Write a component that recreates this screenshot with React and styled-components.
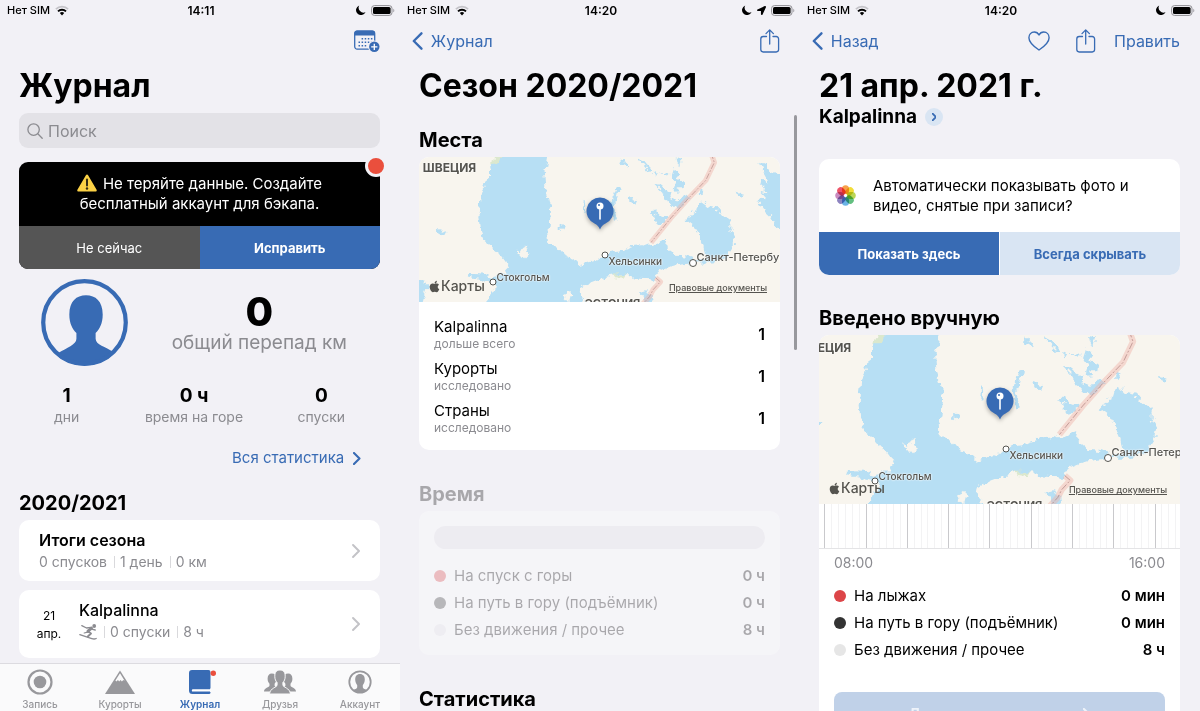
import styled, { createGlobalStyle } from "styled-components";
import { FaApple, FaLocationArrow } from "react-icons/fa";

const blue = "#386bb4";
const grey = "#8b8b90";

const GlobalStyle = createGlobalStyle`
  * { box-sizing: border-box; }
  body {
    margin: 0;
    background: #f2f1f6;
    color: #000;
    font-family: Inter, "Liberation Sans", sans-serif;
  }
  h1, h2, h3, p, ul, dl, dd { margin: 0; padding: 0; }
  button, input { font: inherit; border: 0; padding: 0; background: none; color: inherit; }
  a { color: inherit; text-decoration: none; }
  svg { display: block; flex-shrink: 0; }
`;

const Screens = styled.main`
  display: grid;
  grid-template-columns: repeat(3, 1fr);
  height: 100vh;
  overflow: hidden;
`;

const Screen = styled.section`
  display: flex;
  flex-direction: column;
  min-width: 0;
  min-height: 0;
  position: relative;
`;

const Content = styled.div`
  flex: 1;
  min-height: 0;
  overflow: hidden;
  padding: 0 20px 0 19px;
`;

/* status bar */

const StatusRow = styled.div`
  display: grid;
  grid-template-columns: 1fr auto 1fr;
  align-items: center;
  height: 20px;
  padding: 0 5px 0 7px;
  font-size: 11px;
  font-weight: 500;
`;

const StatusSide = styled.div`
  display: flex;
  align-items: center;
  justify-content: ${(p) => (p.$end ? "flex-end" : "flex-start")};
  gap: 5px;
`;

const Clock = styled.span`
  font-size: 12px;
  font-weight: 600;
`;

/* navigation */

const NavBar = styled.nav`
  display: flex;
  align-items: center;
  justify-content: space-between;
  height: 42px;
  padding: 0 20px 0 12px;
  color: ${blue};
  font-size: 16px;
`;

const NavActions = styled.div`
  display: flex;
  align-items: center;
  gap: 18px;
  margin-left: auto;
`;

const BackLink = styled.a`
  display: flex;
  align-items: center;
  gap: 8px;
`;

const IconButton = styled.button`
  display: flex;
  padding: 0 ${(p) => (p.$roomy ? 8 : 0)}px;
  color: ${blue};
`;

const Title = styled.h1`
  padding-top: 4px;
  font-size: 32px;
  line-height: 40px;
  font-weight: 700;
  white-space: nowrap;
`;

const Heading = styled.h2`
  margin: ${(p) => p.$top}px 0 3px;
  font-size: 20px;
  line-height: 28px;
  font-weight: 700;
`;

/* journal */

const SearchBox = styled.label`
  display: flex;
  align-items: center;
  gap: 5px;
  height: 35px;
  margin-top: 7px;
  padding: 0 8px;
  border-radius: 9px;
  background: #e3e2e7;
  color: ${grey};
`;

const SearchInput = styled.input`
  flex: 1;
  min-width: 0;
  outline: 0;
  font-size: 16px;
  &::placeholder { color: ${grey}; opacity: 1; }
`;

const Banner = styled.div`
  position: relative;
  margin-top: 14px;
`;

const BannerBody = styled.div`
  border-radius: 9px;
  overflow: hidden;
  background: #000;
`;

const BannerText = styled.p`
  padding: 12px 40px;
  color: #fff;
  font-size: 15px;
  line-height: 20px;
  text-align: center;
  svg { display: inline-block; vertical-align: -3px; margin-right: 6px; }
`;

const BannerDot = styled.span`
  position: absolute;
  top: -7px;
  right: -7px;
  width: 22px;
  height: 22px;
  border: 3px solid #f2f1f6;
  border-radius: 50%;
  background: #ea4f3d;
`;

const ButtonPair = styled.div`
  display: grid;
  grid-template-columns: 1fr 1fr;
  gap: ${(p) => p.$gap || 0}px;
`;

const tones = {
  dark: `background: #555; color: #fff; font-weight: 400;`,
  primary: `background: ${blue}; color: #fff; font-weight: 700;`,
  light: `background: #d9e5f3; color: ${blue}; font-weight: 700;`,
};

const BlockButton = styled.button`
  && { ${(p) => tones[p.$tone]} }
  height: 43px;
  font-size: 13px;
`;

const Profile = styled.div`
  display: flex;
  align-items: center;
  margin-top: 10px;
  padding: 0 33px 0 22px;
`;

const Total = styled.div`
  flex: 1;
  display: flex;
  flex-direction: column;
  align-items: flex-end;
`;

const TotalInner = styled.div`
  text-align: center;
  strong { display: block; font-size: 40px; line-height: 40px; font-weight: 800; }
  span { display: block; color: ${grey}; font-size: 19px; line-height: 22px; white-space: nowrap; }
`;

const Stats = styled.dl`
  display: grid;
  grid-template-columns: repeat(3, 1fr);
  margin: 18px -5px 0 -16px;
  text-align: center;
`;

const Stat = styled.div`
  display: flex;
  flex-direction: column-reverse;
  dt { color: ${grey}; font-size: 14px; line-height: 18px; }
  dd { font-size: 19px; line-height: 24px; font-weight: 700; }
`;

const AllStats = styled.a`
  display: flex;
  align-items: center;
  justify-content: flex-end;
  gap: 9px;
  margin-top: 21px;
  padding-right: 19px;
  color: ${blue};
  font-size: 15px;
  line-height: 22px;
`;

const Entry = styled.a`
  display: flex;
  align-items: center;
  min-height: ${(p) => (p.$tall ? 68 : 61)}px;
  margin-bottom: 9px;
  padding-right: 20px;
  border-radius: 10px;
  background: #fff;
`;

const EntryDate = styled.div`
  width: 60px;
  padding-top: 2px;
  font-size: 12px;
  line-height: 18px;
  text-align: center;
`;

const EntryText = styled.div`
  flex: 1;
  align-self: flex-start;
  padding: 10px 0 0 ${(p) => (p.$inset ? 20 : 0)}px;
  line-height: 21px;
  h3 { font-size: 16px; line-height: 21px; font-weight: ${(p) => (p.$inset ? 600 : 500)}; }
`;

const Facts = styled.p`
  display: flex;
  align-items: center;
  color: ${grey};
  font-size: 14px;
  > * + * {
    margin-left: 7px;
    padding-left: 6px;
    background: linear-gradient(#d9d9dc, #d9d9dc) left center / 1px 12px no-repeat;
  }
`;

const TabBar = styled.nav`
  display: grid;
  grid-template-columns: repeat(5, 1fr);
  height: 48px;
  border-top: 1px solid #dcdbe0;
  background: #fafafb;
`;

const Tab = styled.a`
  display: flex;
  flex-direction: column;
  align-items: center;
  gap: 2px;
  padding-top: 5px;
  color: ${(p) => (p.$active ? blue : "#98989c")};
  font-size: 10px;
  line-height: 14px;
  font-weight: ${(p) => (p.$active ? 600 : 500)};
`;

/* cards */

const Card = styled.div`
  overflow: hidden;
  border-radius: 10px;
  background: #fff;
`;

const CardBody = styled.div`
  padding: ${(p) => p.$top}px 15px 15px;
`;

const PlaceRow = styled.li`
  display: flex;
  align-items: center;
  justify-content: space-between;
  & + & { margin-top: 8px; }
  h3 { font-size: 15px; line-height: 19px; font-weight: 400; }
  p { color: ${grey}; font-size: 12px; line-height: 15px; }
  strong { font-size: 16px; font-weight: 600; }
`;

const PlainList = styled.ul`
  list-style: none;
`;

const Disabled = styled.div`
  opacity: 0.3;
`;

const EmptyBar = styled.div`
  height: 23px;
  margin-bottom: 17px;
  border-radius: 12px;
  background: #e4e3e8;
`;

const LegendRow = styled.li`
  display: flex;
  align-items: center;
  gap: 8px;
  font-size: 15px;
  line-height: 20px;
  & + & { margin-top: 7px; }
  strong { margin-left: auto; font-weight: 600; }
`;

const Dot = styled.span`
  width: 12px;
  height: 12px;
  border-radius: 50%;
  background: ${(p) => p.$color};
`;

const ScrollThumb = styled.div`
  position: absolute;
  top: 115px;
  right: 3px;
  width: 3px;
  height: 235px;
  border-radius: 2px;
  background: #98989d;
`;

/* day */

const Resort = styled.p`
  display: flex;
  align-items: center;
  gap: 8px;
  font-size: 19px;
  line-height: 22px;
  font-weight: 700;
`;

const RoundButton = styled.button`
  && { background: #d9e5f3; color: ${blue}; }
  display: flex;
  align-items: center;
  justify-content: center;
  width: 18px;
  height: 18px;
  border-radius: 50%;
`;

const PhotoCard = styled(Card)`
  margin-top: 31px;
`;

const PhotoPrompt = styled.div`
  display: flex;
  align-items: center;
  gap: 17px;
  min-height: 73px;
  padding: 0 16px;
  font-size: 15px;
  line-height: 20px;
`;

const Petal = styled.rect`
  mix-blend-mode: multiply;
`;

const Timeline = styled.svg`
  width: 100%;
  height: 45px;
  border-bottom: 1px solid #e4e4e6;
`;

const Hours = styled.div`
  display: flex;
  justify-content: space-between;
  margin-bottom: 13px;
  color: ${grey};
  font-size: 14px;
  line-height: 20px;
`;

const DetailsButton = styled.button`
  && { background: #c0d1e8; color: #eef3fa; }
  display: flex;
  align-items: center;
  justify-content: center;
  gap: 14px;
  width: 100%;
  height: 43px;
  margin-top: 32px;
  border-radius: 8px;
  font-size: 14px;
  font-weight: 700;
`;

/* map */

const MapFrame = styled.div`
  position: relative;
  overflow: hidden;
  height: ${(p) => p.$height}px;
  background: #f8f5ee;
  color: #55544f;
`;

const MapDrawing = styled.svg`
  width: 100%;
  height: 100%;
`;

const MapLabel = styled.span`
  position: absolute;
  left: calc(50% + ${(p) => p.$x}px);
  top: calc(50% + ${(p) => p.$y}px);
  transform: translate(${(p) => (p.$centered ? "-50%" : "0")}, -50%);
  font-size: ${(p) => p.$size}px;
  line-height: 14px;
  font-weight: ${(p) => p.$weight};
  white-space: nowrap;
  text-shadow: 0 0 2px #fff, 0 0 2px #fff;
`;

const CityDot = styled.span`
  position: absolute;
  left: calc(50% + ${(p) => p.$x}px);
  top: calc(50% + ${(p) => p.$y}px);
  transform: translate(-50%, -50%);
  width: ${(p) => p.$size}px;
  height: ${(p) => p.$size}px;
  border: 1px solid #55544f;
  border-radius: 50%;
  background: #fff;
`;

const MapPin = styled.svg`
  position: absolute;
  left: 50%;
  bottom: 50%;
  transform: translateX(-50%);
  overflow: visible;
  filter: drop-shadow(0 2px 2px rgba(0, 0, 0, 0.3));
`;

const MapBrand = styled.span`
  position: absolute;
  left: 9px;
  bottom: 6px;
  display: flex;
  align-items: center;
  font-size: 14px;
  line-height: 20px;
  font-weight: 500;
`;

const LegalLink = styled.a`
  && { text-decoration: underline; }
  position: absolute;
  right: 13px;
  bottom: 7px;
  font-size: 9px;
  line-height: 14px;
  font-weight: 500;
`;

function Chevron({ size = 14, width = 2, color = "currentColor", back }) {
  return (
    <svg width={size * 0.6} height={size} viewBox="0 0 12 20" fill="none" stroke={color}
      strokeWidth={width} strokeLinecap="round" strokeLinejoin="round" aria-hidden="true">
      <path d={back ? "M10.5 1.5 2 10l8.5 8.5" : "M1.5 1.5 10 10l-8.5 8.5"} />
    </svg>
  );
}

function StatusBar({ time, location }) {
  return (
    <StatusRow>
      <StatusSide>
        Нет SIM
        <svg width="14" height="11" viewBox="0 0 14 11" fill="none">
          <path d="M.9 4.1a8.8 8.8 0 0 1 12.2 0" stroke="#c4c3c8" strokeWidth="1.8" />
          <path d="M3 6.4a5.7 5.7 0 0 1 8 0" stroke="#000" strokeWidth="1.9" />
          <path d="M7 10.4 4.8 8.1a3.2 3.2 0 0 1 4.4 0z" fill="#000" />
        </svg>
      </StatusSide>
      <Clock>{time}</Clock>
      <StatusSide $end>
        <svg width="10" height="10" viewBox="0 0 10 10">
          <path d="M3.2.4a5 5 0 1 0 6.4 6.7A4.9 4.9 0 0 1 3.2.4z" fill="#000" />
        </svg>
        {location && <FaLocationArrow size={9} />}
        <svg width="24" height="11" viewBox="0 0 24 11">
          <rect x=".6" y=".6" width="20.4" height="9.8" rx="2.8" fill="none" stroke="#8f8e93" />
          <rect x="2" y="2" width="17.6" height="7" rx="1.6" fill="#000" />
          <path d="M22.4 3.7v3.6c1.2-.5 1.2-3.1 0-3.6z" fill="#8f8e93" />
        </svg>
      </StatusSide>
    </StatusRow>
  );
}

function ShareIcon() {
  return (
    <svg width="20" height="24" viewBox="0 0 20 24" fill="none" stroke="currentColor"
      strokeWidth="1.3" strokeLinecap="round" strokeLinejoin="round">
      <path d="M6.500 7.500H3.200A2.400 2.400 0 0 0 .8 9.900v10.700A2.400 2.400 0 0 0 3.200 23h13a2.400 2.400 0 0 0 2.400-2.400V9.900a2.400 2.400 0 0 0-2.400-2.400H13" />
      <path d="M9.700 15V1.200M6 4.600l3.700-3.700 3.700 3.700" />
    </svg>
  );
}

function HeartIcon() {
  return (
    <svg width="22" height="20" viewBox="0 0 22 20" fill="none" stroke="currentColor" strokeWidth="1.4" strokeLinejoin="round">
      <path d="M11 19C7 16.300 .9 12 .9 6.700.9 3.400 3.200 1 6.200 1 8.400 1 10.100 2.200 11 4c.9-1.800 2.600-3 4.800-3 3 0 5.300 2.400 5.300 5.700C21.100 12 15 16.300 11 19z" />
    </svg>
  );
}

function SkierIcon() {
  return (
    <svg width="18" height="16" viewBox="0 0 18 16" fill="none" stroke="currentColor" strokeLinecap="round" strokeLinejoin="round">
      <circle cx="15.200" cy="2" r="1.900" fill="currentColor" stroke="none" />
      <path d="M12.500 4.200 9 7.200" strokeWidth="3" />
      <path d="M9.200 7.500 12 9.500l-3.200 3" strokeWidth="1.900" />
      <path d="M2.800 1.600 7.500 4l4.500-.6M12.800 5.200l3.400.8" strokeWidth="1.300" />
      <path d="M9.500 7.800 5.200 9" strokeWidth="1.200" />
      <path d="m.8 10.600 12 4c1.500.5 3 .6 4.400-.1" strokeWidth="1.300" />
    </svg>
  );
}

function CalendarAddIcon() {
  return (
    <svg width="26" height="23" viewBox="0 0 26 23">
      <rect x=".7" y="1.100" width="20" height="18" rx="2.500" fill="none" stroke={blue} strokeWidth="1.300" />
      <path d="M.5 5.500V3A2.500 2.500 0 0 1 3 .5h15.400a2.500 2.500 0 0 1 2.500 2.500v2.500z" fill={blue} />
      {[8, 11.5, 15].map((y, row) =>
        [4.5, 7.6, 10.7, 13.8, 16.900].map((x, col) =>
          (row === 0 && col === 0) || (row === 2 && col > 2) ? null : (
            <rect key={x + y} x={x} y={y} width="1.500" height="1.500" fill={blue} />
          )
        )
      )}
      <circle cx="20.300" cy="16.800" r="6.200" fill="#f2f1f6" />
      <circle cx="20.300" cy="16.800" r="5.200" fill={blue} />
      <path d="M20.300 13.700v6.200M17.200 16.800h6.200" stroke="#fff" strokeWidth="1.300" />
    </svg>
  );
}

function Avatar() {
  return (
    <svg width="87" height="87" viewBox="0 0 86 86" role="img" aria-label="Профиль">
      <clipPath id="avatar"><circle cx="43" cy="43" r="42.500" /></clipPath>
      <g clipPath="url(#avatar)" fill={blue}>
        <path d="M44.500 16C54 16 61 22 61 35c0 9-3 14-7 18.500V59c0 6 10 8 17.500 13v18h-54V73C25 68 35 65 35 59v-5.500C31 49 28 44 28 35c0-13 7-19 16.500-19z" />
      </g>
      <circle cx="43" cy="43" r="40.800" fill="none" stroke={blue} strokeWidth="4.200" />
    </svg>
  );
}

function PhotosIcon() {
  const petals = ["#f7a04a", "#f2dd3a", "#bcd655", "#63bf80", "#6bb4e6", "#8d84c0", "#c98bc0", "#ee5468"];
  return (
    <svg width="21" height="21" viewBox="-12 -12 24 24">
      {petals.map((color, i) => (
        <Petal key={color} x="-4" y="-11.700" width="8" height="10" rx="4" fill={color}
          transform={`rotate(${i * 45})`} />
      ))}
    </svg>
  );
}

function WarningIcon() {
  return (
    <svg width="20" height="18" viewBox="0 0 20 18">
      <path d="M8.900 1.200a1.300 1.300 0 0 1 2.200 0l8.500 14.500a1.200 1.200 0 0 1-1.100 1.800h-17A1.200 1.200 0 0 1 .4 15.700z" fill="#fbd145" />
      <path d="M10 5.500v6" stroke="#332c16" strokeWidth="2" strokeLinecap="round" />
      <circle cx="10" cy="14.500" r="1.200" fill="#332c16" />
    </svg>
  );
}

const tabs = [
  {
    name: "Запись",
    icon: (
      <>
        <circle cx="16" cy="13" r="11.500" fill="none" stroke="currentColor" strokeWidth="2.200" />
        <circle cx="16" cy="13" r="6.300" />
      </>
    ),
  },
  {
    name: "Курорты",
    icon: (
      <>
        <path d="M16 1.500 31 25H1z" />
        <path d="m16 4.200-4.600 7.300.9 1 1.700-1.500 1.100 1.600 1.500-1.600 1.300 1.500 1.400-1.400 1.300.7z" fill="#fafafb" />
      </>
    ),
  },
  {
    name: "Журнал",
    active: true,
    icon: (
      <>
        <path d="M8 1h16.500a2 2 0 0 1 2 2v16.500H26V23h.5v.5a1.500 1.500 0 0 1-1.500 1.500H8.500A3.500 3.500 0 0 1 5 21.500V4a3 3 0 0 1 3-3z" />
        <path d="M9 20.200h17.500v2.400H9a1.200 1.200 0 0 1 0-2.400z" fill="#fff" />
        <circle cx="29.300" cy="4.300" r="2.700" fill="#ea4f3d" />
      </>
    ),
  },
  {
    name: "Друзья",
    icon: (
      <>
        <path d="M7.800 4.500c3 0 4.600 2 4.600 5.200 0 2.400-.8 3.900-1.800 5v1.800c0 1.600 3 1.800 4.400 3.500v2.500H0c0-4 5.500-3.800 5.500-6v-1.800c-1-1.100-1.900-2.600-1.900-5 0-3.200 1.500-5.200 4.200-5.200z" />
        <path d="M24.200 4.500c-3 0-4.600 2-4.600 5.200 0 2.400.8 3.900 1.800 5v1.800c0 1.600-3 1.800-4.400 3.500v2.500h15c0-4-5.500-3.800-5.500-6v-1.800c1-1.100 1.900-2.600 1.900-5 0-3.200-1.500-5.200-4.200-5.200z" />
        <path stroke="#fafafb" d="M16 1c3.400 0 5.200 2.400 5.200 6.200 0 3-.9 4.900-2.300 6.300v2.400c0 2.700 6.900 2.700 7.600 9.100h-21c.7-6.400 7.600-6.400 7.600-9.100v-2.400c-1.400-1.400-2.300-3.300-2.300-6.300C10.800 3.400 12.600 1 16 1z" />
      </>
    ),
  },
  {
    name: "Аккаунт",
    icon: (
      <>
        <circle cx="16" cy="13" r="10.700" fill="none" stroke="currentColor" strokeWidth="1.800" />
        <path d="M16 5c3.200 0 4.800 2.200 4.800 5.600 0 2.700-1 4.300-2 5.600v2c0 1.500 2.700 1.900 4.400 3a11 11 0 0 1-14.400 0c1.700-1.100 4.400-1.500 4.400-3v-2c-1-1.300-2-2.900-2-5.600C11.200 7.200 12.800 5 16 5z" />
      </>
    ),
  },
];

function TravelMap({ id, height, zoom }) {
  const at = (n) => Math.round(n * zoom);
  return (
    <MapFrame $height={height}>
      <MapDrawing viewBox="12 21 1083 436" preserveAspectRatio="xMidYMid slice" aria-hidden="true">
        <filter id={id} x="-5%" y="-5%" width="110%" height="110%">
          <feTurbulence type="fractalNoise" baseFrequency="0.055" numOctaves="2" seed="4" />
          <feDisplacementMap in="SourceGraphic" scale="26" xChannelSelector="R" yChannelSelector="G" />
        </filter>
        <g filter={`url(#${id})`}>
          <path fill="#b7dff4" d="M247 0 240 35 222 58 222 84 204 98 210 118 196 145 193 175 190 205 195 240 206 268 228 286 232 300 262 322 282 350 270 362 277 378 250 378 225 384 205 374 160 372 158 380 200 388 222 394 242 402 236 420 222 440 205 480 520 480 497 432 500 412 522 400 550 390 580 380 610 374 640 376 662 386 700 388 720 390 722 374 742 360 772 348 805 343 828 340 838 328 815 320 778 318 765 300 754 292 757 266 738 270 716 286 700 278 680 286 655 288 625 298 608 306 585 308 570 316 556 327 528 336 490 346 474 330 450 320 438 306 420 284 396 282 394 250 404 230 408 180 400 145 388 110 385 70 394 50 402 0z" />
          <path fill="#b7dff4" d="M812 210 822 198 836 190 842 168 858 155 880 170 906 176 926 200 946 216 946 236 960 260 956 286 942 308 934 324 894 338 845 338 842 330 872 328 866 290 850 250 834 226z" />
          <path fill="#b7dff4" d="M1032 36 1052 44 1066 68 1120 80 1120 260 1084 228 1068 200 1046 180 1028 154 1036 144 1056 148 1036 126 1056 130 1036 106 1040 92 1064 100 1044 64z" />
          <path fill="#b7dff4" d="M672 430 690 424 710 434 716 480 680 480 688 450zM0 388 28 392 40 410 32 430 20 470 0 470z" />
          <path fill="#b7dff4" d="M702 185 722 182 736 198 758 206 752 218 728 222 716 210 722 200zM716 100 740 108 752 120 770 130 766 145 790 155 812 130 826 142 812 160 786 180 768 164 752 148 742 126zM776 60 790 56 796 72 788 90 808 98 806 112 788 112 792 124 776 126 780 100 768 84zM614 21 622 34 640 42 638 50 618 40zM664 21 684 32 700 50 712 62 706 70 688 50zM718 62 728 70 720 84zM738 70 764 72 756 80zM604 112 614 118 606 150 596 170 606 208 594 210 586 180 594 150zM506 156 514 162 512 190 504 180zM644 142 664 148 658 162 646 156zM434 224 446 232 442 242 434 234zM62 236 82 242 92 250 76 256zM960 126 984 132 976 144 964 140zM858 118 866 126 862 138 854 130zM782 26 800 30 796 46 784 40z" />
          <path fill="#f8f5ee" d="M306 300 320 304 328 290 334 306 344 312 330 326 318 312 306 314zM446 436 458 430 460 420 470 432 478 438 464 444 460 458 450 446z" />
          <path fill="#dbe8ce" d="M234 16 258 16 248 44 228 46zM596 374 636 374 618 384 600 382z" />
        </g>
        <g fill="none" strokeLinejoin="round">
          <path d="M888 10 898 38 872 92 820 146 768 204 708 278M722 384 736 396 714 420 704 440 684 462" stroke="#f0b3a8" strokeOpacity=".45" strokeWidth="16" />
          <path d="M888 10 898 38 872 92 820 146 768 204 708 278M722 384 736 396 714 420 704 440 684 462" stroke="#b58b86" strokeWidth="2" strokeDasharray="18 5 5 5" />
        </g>
      </MapDrawing>
      <MapLabel $x={at(-150)} $y={at(-62)} $size={12} $weight={700} $centered>ШВЕЦИЯ</MapLabel>
      <MapLabel $x={at(13)} $y={at(73)} $size={11} $weight={700} $centered>ЭСТОНИЯ</MapLabel>
      <CityDot $x={at(5)} $y={at(25)} $size={7} />
      <MapLabel $x={at(5) + 4} $y={at(25) + 6} $size={10} $weight={500}>Хельсинки</MapLabel>
      <CityDot $x={at(93)} $y={at(33)} $size={8} />
      <MapLabel $x={at(93) + 4} $y={at(33) - 6} $size={11} $weight={500}>Санкт-Петербург</MapLabel>
      <CityDot $x={at(-107)} $y={at(52)} $size={7} />
      <MapLabel $x={at(-107) + 4} $y={at(52) - 5} $size={10} $weight={500}>Стокгольм</MapLabel>
      <MapPin width="28" height="33" viewBox="0 0 28 33">
        <path d="M14 .5a13.600 13.600 0 0 1 5.500 26c-2.600 1.200-4 2.500-5.500 6-1.500-3.500-2.900-4.800-5.500-6A13.600 13.600 0 0 1 14 .5z" fill={blue} />
        <path d="M14 10v12" stroke="#fff" strokeWidth="1.600" strokeLinecap="round" />
        <circle cx="14" cy="9" r="3.500" fill="#fff" />
        <circle cx="13" cy="8" r="1" fill={blue} />
      </MapPin>
      <MapBrand><FaApple size={13} />Карты</MapBrand>
      <LegalLink href="#legal">Правовые документы</LegalLink>
    </MapFrame>
  );
}

function Journal() {
  return (
    <Screen>
      <StatusBar time="14:11" />
      <NavBar>
        <NavActions>
          <IconButton aria-label="Добавить день"><CalendarAddIcon /></IconButton>
        </NavActions>
      </NavBar>
      <Content>
        <Title>Журнал</Title>
        <SearchBox>
          <svg width="16" height="16" viewBox="0 0 16 16" fill="none" stroke="currentColor" strokeWidth="1.300" strokeLinecap="round">
            <circle cx="6.600" cy="6.600" r="5.700" />
            <path d="m10.800 10.800 4.400 4.400" />
          </svg>
          <SearchInput type="search" placeholder="Поиск" aria-label="Поиск" />
        </SearchBox>
        <Banner>
          <BannerBody>
            <BannerText><WarningIcon />Не теряйте данные. Создайте бесплатный аккаунт для бэкапа.</BannerText>
            <ButtonPair>
              <BlockButton $tone="dark">Не сейчас</BlockButton>
              <BlockButton $tone="primary">Исправить</BlockButton>
            </ButtonPair>
          </BannerBody>
          <BannerDot />
        </Banner>
        <Profile>
          <Avatar />
          <Total>
            <TotalInner><strong>0</strong><span>общий перепад км</span></TotalInner>
          </Total>
        </Profile>
        <Stats>
          <Stat><dt>дни</dt><dd>1</dd></Stat>
          <Stat><dt>время на горе</dt><dd>0 ч</dd></Stat>
          <Stat><dt>спуски</dt><dd>0</dd></Stat>
        </Stats>
        <AllStats href="#stats">Вся статистика <Chevron size={13} width={3.200} /></AllStats>
        <Heading $top={20}>2020/2021</Heading>
        <Entry href="#season">
          <EntryText $inset>
            <h3>Итоги сезона</h3>
            <Facts><span>0 спусков</span><span>1 день</span><span>0 км</span></Facts>
          </EntryText>
          <Chevron color="#c3c3c7" width={2.800} />
        </Entry>
        <Entry href="#day" $tall>
          <EntryDate>21<br />апр.</EntryDate>
          <EntryText>
            <h3>Kalpalinna</h3>
            <Facts><SkierIcon /><span>0 спуски</span><span>8 ч</span></Facts>
          </EntryText>
          <Chevron color="#c3c3c7" width={2.800} />
        </Entry>
      </Content>
      <TabBar>
        {tabs.map((tab) => (
          <Tab key={tab.name} href="#" $active={tab.active}>
            <svg width="32" height="26" viewBox="0 0 32 26" fill="currentColor">{tab.icon}</svg>
            {tab.name}
          </Tab>
        ))}
      </TabBar>
    </Screen>
  );
}

const places = [
  ["Kalpalinna", "дольше всего", 1],
  ["Курорты", "исследовано", 1],
  ["Страны", "исследовано", 1],
];

function Legend({ items }) {
  return (
    <PlainList>
      {items.map(([color, label, value]) => (
        <LegendRow key={label}><Dot $color={color} />{label}<strong>{value}</strong></LegendRow>
      ))}
    </PlainList>
  );
}

function Season() {
  return (
    <Screen>
      <StatusBar time="14:20" location />
      <NavBar>
        <BackLink href="#journal"><Chevron back size={18} width={2.600} />Журнал</BackLink>
        <NavActions>
          <IconButton aria-label="Поделиться"><ShareIcon /></IconButton>
        </NavActions>
      </NavBar>
      <Content>
        <Title>Сезон 2020/2021</Title>
        <Heading $top={20}>Места</Heading>
        <Card>
          <TravelMap id="coastSeason" height={145} zoom={1} />
          <CardBody $top={15}>
            <PlainList>
              {places.map(([name, note, count]) => (
                <PlaceRow key={name}>
                  <div><h3>{name}</h3><p>{note}</p></div>
                  <strong>{count}</strong>
                </PlaceRow>
              ))}
            </PlainList>
          </CardBody>
        </Card>
        <Disabled>
          <Heading $top={30}>Время</Heading>
          <Card>
            <CardBody $top={15}>
              <EmptyBar />
              <Legend items={[
                ["#dc4548", "На спуск с горы", "0 ч"],
                ["#333", "На путь в гору (подъёмник)", "0 ч"],
                ["#e6e6e9", "Без движения / прочее", "8 ч"],
              ]} />
            </CardBody>
          </Card>
        </Disabled>
        <Heading $top={30}>Статистика</Heading>
      </Content>
      <ScrollThumb />
    </Screen>
  );
}

function TimelineChart() {
  const ticks = Array.from({ length: 52 }, (_, i) => i);
  return (
    <Timeline shapeRendering="crispEdges" aria-hidden="true">
      {ticks.map((i) => {
        const x = `${1.6 + i * 1.906}%`;
        return <line key={i} x1={x} x2={x} y1="0" y2="44" stroke={i % 6 ? "#f3f3f4" : "#c9c9cc"} />;
      })}
    </Timeline>
  );
}

function Day() {
  return (
    <Screen>
      <StatusBar time="14:20" />
      <NavBar>
        <BackLink href="#back"><Chevron back size={18} width={2.600} />Назад</BackLink>
        <NavActions>
          <IconButton $roomy aria-label="Нравится"><HeartIcon /></IconButton>
          <IconButton aria-label="Поделиться"><ShareIcon /></IconButton>
          <IconButton>Править</IconButton>
        </NavActions>
      </NavBar>
      <Content>
        <Title>21 апр. 2021 г.</Title>
        <Resort>
          Kalpalinna
          <RoundButton aria-label="Открыть курорт"><Chevron size={8} width={4.500} /></RoundButton>
        </Resort>
        <PhotoCard>
          <PhotoPrompt>
            <PhotosIcon />
            <p>Автоматически показывать фото и видео, снятые при записи?</p>
          </PhotoPrompt>
          <ButtonPair $gap={1}>
            <BlockButton $tone="primary">Показать здесь</BlockButton>
            <BlockButton $tone="light">Всегда скрывать</BlockButton>
          </ButtonPair>
        </PhotoCard>
        <Heading $top={29}>Введено вручную</Heading>
        <Card>
          <TravelMap id="coastDay" height={169} zoom={1.166} />
          <TimelineChart />
          <CardBody $top={4}>
            <Hours><span>08:00</span><span>16:00</span></Hours>
            <Legend items={[
              ["#dc4548", "На лыжах", "0 мин"],
              ["#333", "На путь в гору (подъёмник)", "0 мин"],
              ["#e6e6e6", "Без движения / прочее", "8 ч"],
            ]} />
            <DetailsButton>Детали спуска и карта <Chevron size={12} width={3.500} /></DetailsButton>
          </CardBody>
        </Card>
      </Content>
    </Screen>
  );
}

export default function App() {
  return (
    <Screens>
      <GlobalStyle />
      <Journal />
      <Season />
      <Day />
    </Screens>
  );
}
